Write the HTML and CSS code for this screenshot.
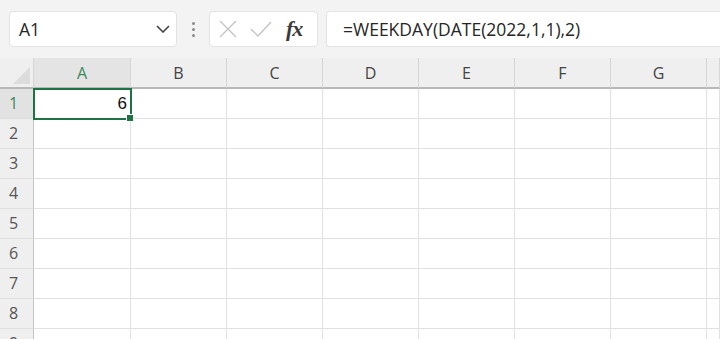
FILE: index.html
```html
<!DOCTYPE html>
<html>

<head lang="en">
    <meta charset="UTF-8">
    <title>Sheet</title>
    <link rel="stylesheet" href="styles.css">
</head>

<body>
    <div class="toolbar">
        <div class="name-box">
            <span class="name-text">A1</span>
            <svg class="chev" width="14" height="8" viewBox="0 0 14 8"><path d="M1 1 L7 7 L13 1" fill="none" stroke="#444" stroke-width="1.6"/></svg>
        </div>
        <div class="dots"><i></i><i></i><i></i></div>
        <div class="fx-box">
            <svg width="20" height="20" viewBox="0 0 20 20"><path d="M2 2 L18 18 M18 2 L2 18" stroke="#c4c4c4" stroke-width="1.4"/></svg>
            <svg width="22" height="18" viewBox="0 0 22 18"><path d="M1 9 L8 16 L21 2" fill="none" stroke="#c4c4c4" stroke-width="1.4"/></svg>
            <span class="fx">fx</span>
        </div>
        <div class="formula">=WEEKDAY(DATE(2022,1,1),2)</div>
    </div>

    <div class="sheet">
        <div class="corner"></div>
        <div class="col-head active">A</div>
        <div class="col-head">B</div>
        <div class="col-head">C</div>
        <div class="col-head">D</div>
        <div class="col-head">E</div>
        <div class="col-head">F</div>
        <div class="col-head">G</div>
        <div class="col-head"></div>
    </div>
    <script>
        // build the rows
        let sheet = document.querySelector('.sheet')
        for (let r = 1; r <= 9; r++) {
            let head = document.createElement('div')
            head.className = 'row-head' + (r === 1 ? ' active' : '')
            head.textContent = r
            sheet.appendChild(head)
            for (let c = 0; c < 8; c++) {
                let cell = document.createElement('div')
                cell.className = 'cell'
                if (r === 1 && c === 0) {
                    cell.className = 'cell selected'
                    cell.innerHTML = '6<span class="handle"></span>'
                }
                sheet.appendChild(cell)
            }
        }
    </script>
</body>

</html>
```

FILE: styles.css
```css
body {
    margin: 0px;
    width: 720px;
    height: 339px;
    overflow: hidden;
    background: #ffffff;
    font-family: "Open Sans", "Noto Sans", sans-serif;
}

.toolbar {
    height: 58px;
    background: #f3f3f3;
    display: flex;
    align-items: flex-start;
    padding: 11px 0px 0px 9px;
    box-sizing: border-box;
}

.name-box {
    width: 168px;
    height: 36px;
    box-sizing: border-box;
    background: #ffffff;
    border: 1px solid #e3e3e3;
    border-radius: 4px;
    display: flex;
    align-items: center;
    justify-content: space-between;
    padding: 0px 6px 0px 9px;
}

.name-text {
    font-size: 17.5px;
    color: #262626;
}

.dots {
    width: 32px;
    height: 36px;
    display: flex;
    flex-direction: column;
    align-items: center;
    justify-content: center;
    gap: 3px;
}

.dots i {
    display: block;
    width: 3px;
    height: 3px;
    border-radius: 2px;
    background: #8a8a8a;
}

.fx-box {
    width: 109px;
    height: 36px;
    box-sizing: border-box;
    background: #ffffff;
    border: 1px solid #e3e3e3;
    border-radius: 4px;
    display: flex;
    align-items: center;
    padding-left: 8px;
    gap: 12px;
}

.fx {
    font-family: "Liberation Serif", "DejaVu Serif", serif;
    font-style: italic;
    font-weight: bold;
    font-size: 22px;
    color: #3a3a3a;
    margin-left: 2px;
    letter-spacing: -1px;
}

.formula {
    flex: 1;
    margin-left: 8px;
    height: 36px;
    box-sizing: border-box;
    background: #ffffff;
    border: 1px solid #e3e3e3;
    border-right: none;
    border-radius: 4px 0px 0px 4px;
    padding-left: 16px;
    line-height: 34px;
    font-size: 17.5px;
    color: #262626;
}

.sheet {
    display: grid;
    grid-template-columns: 34px 97px repeat(6, 96px) 1fr;
    grid-template-rows: 31px;
    grid-auto-rows: 30px;
}

.corner {
    background: #efefef;
    border-right: 1px solid #d6d6d6;
    border-bottom: 2px solid #b8b8b8;
    position: relative;
}

.corner::after {
    content: "";
    position: absolute;
    right: 3px;
    bottom: 3px;
    border-style: solid;
    border-width: 0px 0px 17px 17px;
    border-color: transparent transparent #dcdcdc transparent;
}

.col-head {
    background: #efefef;
    border-right: 1px solid #d6d6d6;
    border-bottom: 2px solid #b8b8b8;
    text-align: center;
    line-height: 30px;
    font-size: 16px;
    color: #444444;
}

.col-head.active {
    background: #e4e4e4;
    color: #3b8a5a;
}

.row-head {
    background: #efefef;
    border-right: 1px solid #c4c4c4;
    border-bottom: 1px solid #dedede;
    font-size: 16px;
    line-height: 29px;
    padding-left: 9px;
    color: #555555;
}

.row-head.active {
    background: #e2e2e2;
    color: #3b8a5a;
}

.cell {
    border-right: 1px solid #e1e1e1;
    border-bottom: 1px solid #e1e1e1;
}

.cell.selected {
    position: relative;
    text-align: right;
    font-family: "Liberation Sans", "Noto Sans", sans-serif;
    font-size: 17px;
    line-height: 30px;
    padding-right: 3px;
    color: #111111;
    outline: 2px solid #1f7244;
    outline-offset: -1px;
}

.handle {
    position: absolute;
    right: -4px;
    bottom: -4px;
    width: 6px;
    height: 6px;
    background: #1f7244;
    border: 1px solid #ffffff;
}
```
